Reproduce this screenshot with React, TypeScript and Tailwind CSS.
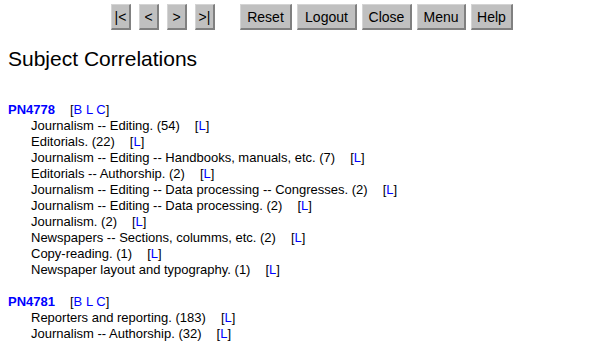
const nav = ['|<', '<', '>', '>|'];
const actions = [
  { label: 'Reset', w: 'w-[52px]' },
  { label: 'Logout', w: 'w-[60px]' },
  { label: 'Close', w: 'w-[50px]' },
  { label: 'Menu', w: 'w-[49px]' },
  { label: 'Help', w: 'w-[42px]' },
];

const groups = [
  {
    code: 'PN4778',
    rows: [
      'Journalism -- Editing. (54)',
      'Editorials. (22)',
      'Journalism -- Editing -- Handbooks, manuals, etc. (7)',
      'Editorials -- Authorship. (2)',
      'Journalism -- Editing -- Data processing -- Congresses. (2)',
      'Journalism -- Editing -- Data processing. (2)',
      'Journalism. (2)',
      'Newspapers -- Sections, columms, etc. (2)',
      'Copy-reading. (1)',
      'Newspaper layout and typography. (1)',
    ],
  },
  {
    code: 'PN4781',
    rows: ['Reporters and reporting. (183)', 'Journalism -- Authorship. (32)'],
  },
];

function Btn({ children, w }: { children: React.ReactNode; w: string }) {
  return (
    <button
      className={`${w} h-[26px] bg-[#c0c0c0] border-t border-l border-[#d4d4d4] border-r-2 border-b-2 border-r-[#808080] border-b-[#808080] text-[14px] text-black flex items-center justify-center leading-none`}
    >
      {children}
    </button>
  );
}

export default function App() {
  return (
    <div className="w-[616px] h-[345px] bg-white text-black overflow-hidden" style={{ fontFamily: '"Liberation Sans", Arial, sans-serif' }}>
      <div className="flex justify-center pt-[4px] pl-[8px]">
        <div className="flex gap-[8px]">
          {nav.map((n) => (
            <Btn key={n} w="w-[20px]">
              {n}
            </Btn>
          ))}
        </div>
        <div className="flex gap-[5px] ml-[25px]">
          {actions.map((a) => (
            <Btn key={a.label} w={a.w}>
              {a.label}
            </Btn>
          ))}
        </div>
      </div>

      <h1 className="text-[21px] leading-none mt-[18px] ml-[8px]">Subject Correlations</h1>

      <div className="mt-[33px] ml-[8px] text-[13px] leading-[16px]">
        {groups.map((g, gi) => (
          <div key={g.code} className={gi > 0 ? 'mt-[16px]' : ''}>
            <div>
              <span className="font-bold text-[#0000ff]">{g.code}</span>
              <span className="ml-[15px]">
                [<span className="text-[#0000ff]">B L C</span>]
              </span>
            </div>
            {g.rows.map((r) => (
              <div key={r} className="pl-[23px]">
                {r}
                <span className="ml-[15px]">
                  [<span className="text-[#0000ff]">L</span>]
                </span>
              </div>
            ))}
          </div>
        ))}
      </div>
    </div>
  );
}
